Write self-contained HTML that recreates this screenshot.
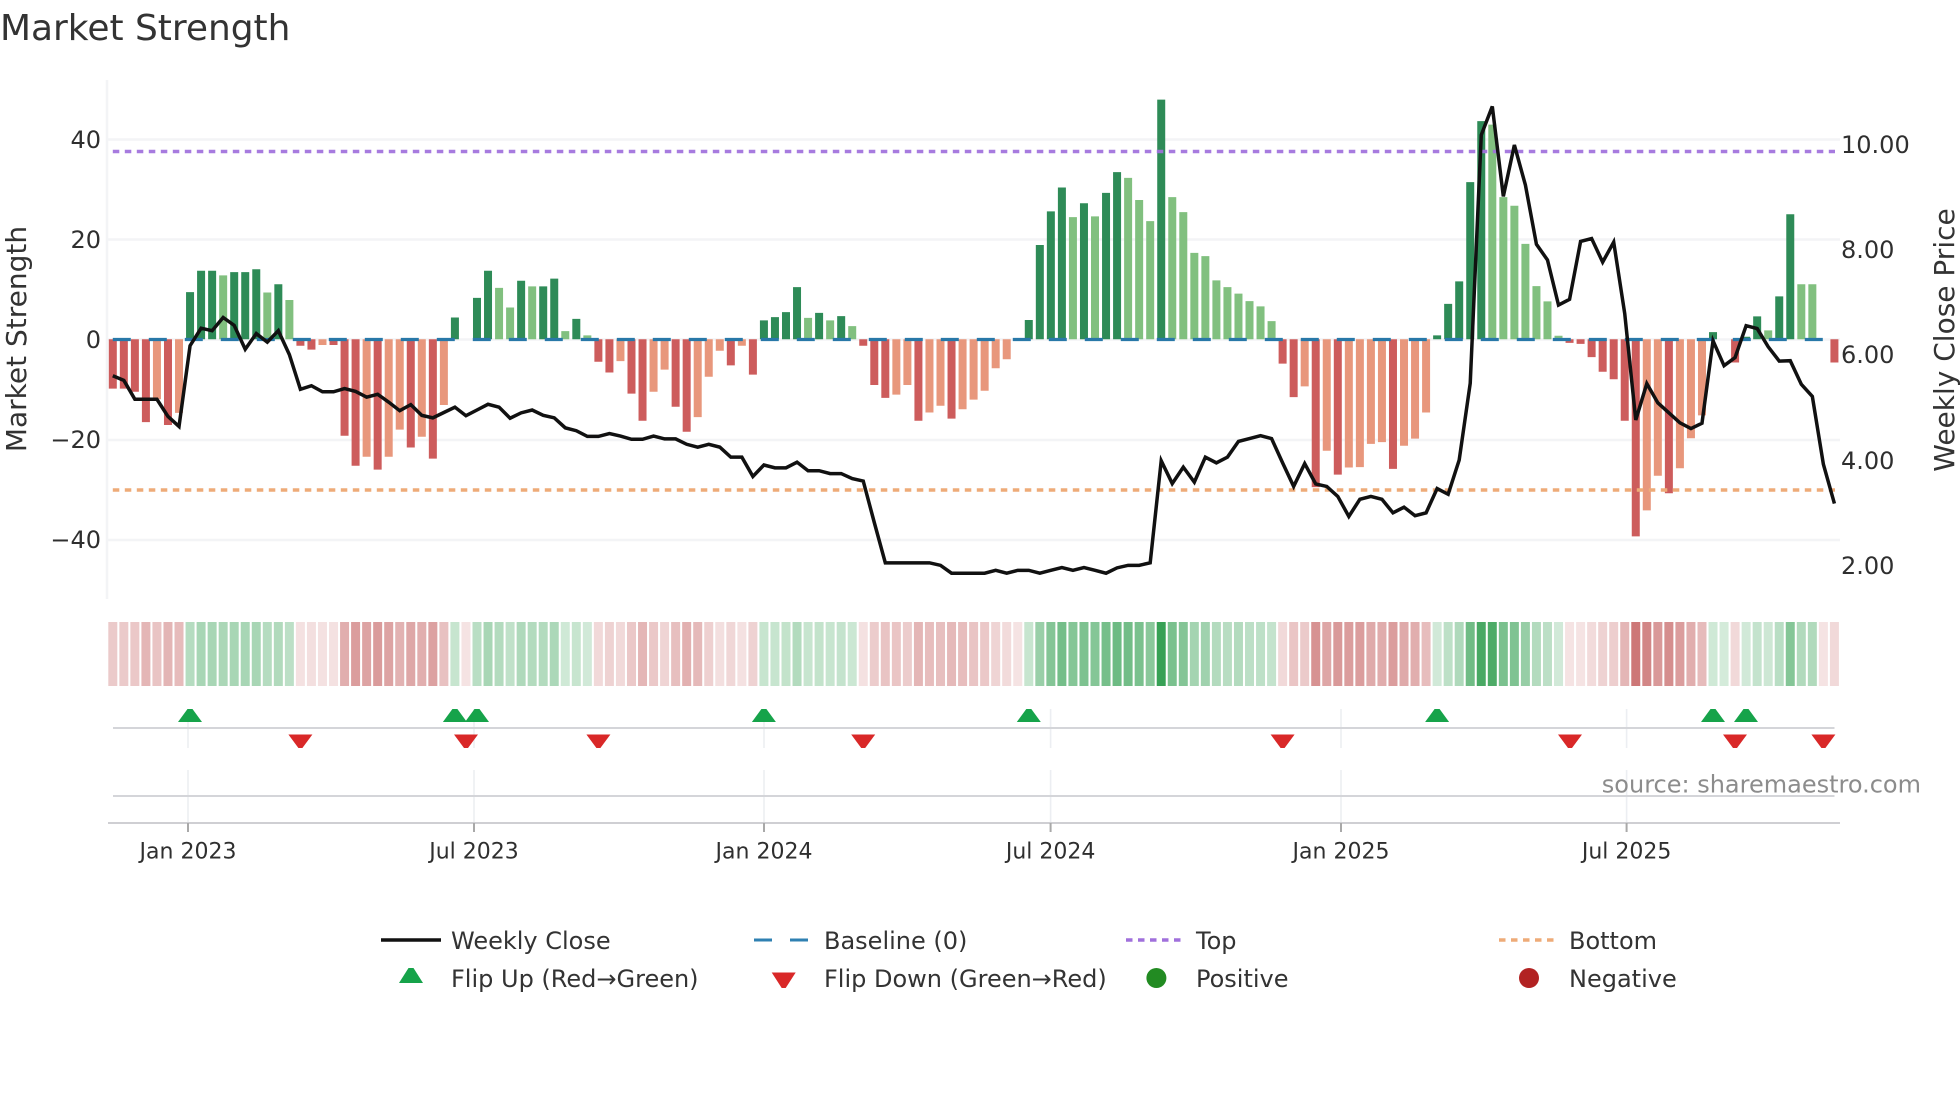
<!DOCTYPE html>
<html><head><meta charset="utf-8"><title>Market Strength</title>
<style>
html,body{margin:0;padding:0;background:#fff}
svg{display:block}
text{font-family:"DejaVu Sans","Liberation Sans",sans-serif}
</style></head><body>
<svg width="1960" height="1102" viewBox="0 0 1960 1102" xmlns="http://www.w3.org/2000/svg">
<rect width="1960" height="1102" fill="#fff"/>
<text x="0" y="40" font-size="35.95" fill="#333">Market Strength</text>

<!-- grid -->
<path d="M107 80V599" stroke="#f3f4f6" stroke-width="2.5"/>
<path d="M108 139.5H1840M108 239.5H1840M108 339.5H1840M108 440H1840M108 540H1840" stroke="#f3f4f6" stroke-width="2.5" fill="none"/>

<!-- bars -->
<g transform="matrix(11.036 0 0 .35714 112.8 60)" fill="none" stroke-width=".725">
<path stroke="#2e8b57" d="M7 782V650M8 782V590M9 782V590M11 782V594M12 782V594M13 782V586M15 782V628M31 782V721M33 782V666M34 782V590M37 782V618M39 782V634M40 782V612M42 782V725M59 782V729M60 782V720M61 782V706M62 782V636M64 782V708M66 782V717M83 782V728M84 782V518M85 782V424M86 782V357M88 782V401M90 782V372M91 782V314M95 782V111M120 782V771M121 782V683M122 782V620M123 782V342M124 782V171M145 782V762M148 782V775M149 782V718M151 782V662M152 782V432"/>
<path stroke="#81c07f" d="M10 782V603M14 782V651M16 782V672M35 782V638M36 782V693M38 782V634M41 782V759M43 782V771M63 782V722M65 782V729M67 782V745M87 782V440M89 782V438M92 782V330M93 782V392M94 782V451M96 782V384M97 782V426M98 782V540M99 782V549M100 782V617M101 782V636M102 782V654M103 782V675M104 782V690M105 782V731M125 782V181M126 782V384M127 782V408M128 782V515M129 782V633M130 782V676M131 782V772M150 782V757M153 782V628M154 782V628"/>
<path stroke="#cd5c5c" d="M0 782V920M1 782V920M2 782V929M3 782V1014M5 782V1022M17 782V800M18 782V811M20 782V798M21 782V1052M22 782V1136M24 782V1147M27 782V1085M29 782V1116M44 782V845M45 782V875M47 782V934M48 782V1010M51 782V971M52 782V1041M56 782V855M58 782V881M68 782V800M69 782V910M70 782V946M73 782V1010M76 782V1004M106 782V850M107 782V944M109 782V1196M111 782V1161M116 782V1145M132 782V792M133 782V795M134 782V832M135 782V873M136 782V894M137 782V1010M138 782V1334M141 782V1213M147 782V847M156 782V847"/>
<path stroke="#e8977c" d="M4 782V950M6 782V988M19 782V798M23 782V1111M25 782V1111M26 782V1035M28 782V1055M30 782V966M46 782V843M49 782V929M50 782V867M53 782V1000M54 782V887M55 782V814M57 782V800M71 782V937M72 782V910M74 782V987M75 782V968M77 782V978M78 782V951M79 782V926M80 782V863M81 782V838M108 782V914M110 782V1094M112 782V1141M113 782V1140M114 782V1075M115 782V1070M117 782V1080M118 782V1060M119 782V987M139 782V1261M140 782V1164M142 782V1143M143 782V1059M144 782V995"/>
</g>

<!-- reference lines -->
<path d="M112.8 339.5H1835" stroke="#2878a8" stroke-width="3.2" stroke-dasharray="18 18" fill="none"/>
<path d="M112.8 151.5H1835" stroke="#a070dc" stroke-opacity=".92" stroke-width="3.4" stroke-dasharray="6.5 5.5" fill="none"/>
<path d="M112.8 490H1835" stroke="#eeab78" stroke-width="3.4" stroke-dasharray="6.5 5.5" fill="none"/>

<!-- weekly close -->
<g transform="matrix(11.036 0 0 .35714 112.8 60)">
<polyline vector-effect="non-scaling-stroke" fill="none" stroke="#111" stroke-width="3.5" stroke-linejoin="miter" points="0,884 1,897 2,950 3,950 4,950 5,998 6,1026 7,800 8,751 9,758 10,721 11,743 12,810 13,766 14,790 15,758 16,825 17,922 18,912 19,929 20,929 21,920 22,928 23,944 24,936 25,958 26,982 27,965 28,995 29,1002 30,987 31,972 32,996 33,980 34,964 35,972 36,1003 37,988 38,980 39,995 40,1002 41,1030 42,1038 43,1054 44,1054 45,1046 46,1053 47,1062 48,1062 49,1053 50,1061 51,1061 52,1076 53,1084 54,1076 55,1084 56,1112 57,1112 58,1166 59,1134 60,1142 61,1142 62,1126 63,1150 64,1150 65,1158 66,1158 67,1172 68,1179 69,1295 70,1408 71,1408 72,1408 73,1408 74,1408 75,1415 76,1437 77,1437 78,1437 79,1437 80,1429 81,1437 82,1429 83,1429 84,1437 85,1429 86,1421 87,1429 88,1421 89,1429 90,1437 91,1422 92,1415 93,1415 94,1408 95,1122 96,1186 97,1140 98,1182 99,1112 100,1128 101,1112 102,1068 103,1060 104,1052 105,1060 106,1128 107,1194 108,1130 109,1187 110,1194 111,1222 112,1278 113,1230 114,1222 115,1230 116,1268 117,1252 118,1276 119,1268 120,1200 121,1216 122,1120 123,905 124,210 125,130 126,382 127,238 128,350 129,516 130,560 131,686 132,670 133,508 134,500 135,566 136,510 137,710 138,1008 139,906 140,960 141,988 142,1016 143,1032 144,1017 145,786 146,856 147,833 148,744 149,752 150,803 151,843 152,842 153,908 154,942 155,1132 156,1242"/>
</g>

<!-- axis labels -->
<g font-size="24" fill="#2f2f2f" text-anchor="end">
<text x="101" y="148">40</text>
<text x="101" y="248">20</text>
<text x="101" y="348">0</text>
<text x="101" y="448">−20</text>
<text x="101" y="548">−40</text>
</g>
<g font-size="24" fill="#2f2f2f">
<text x="1841" y="153">10.00</text>
<text x="1841" y="258">8.00</text>
<text x="1841" y="363">6.00</text>
<text x="1841" y="469">4.00</text>
<text x="1841" y="574">2.00</text>
</g>
<text font-size="28" fill="#333" text-anchor="middle" transform="translate(26 339) rotate(-90)">Market Strength</text>
<text font-size="28" fill="#333" text-anchor="middle" transform="translate(1954 340) rotate(-90)">Weekly Close Price</text>

<!-- heat strip -->
<g transform="matrix(11.036 0 0 64 112.8 622)" fill="none" stroke-width=".815">
<g stroke="#b02a2a"><path d="M0 0V1" opacity=".25"/><path d="M1 0V1" opacity=".25"/><path d="M2 0V1" opacity=".26"/><path d="M3 0V1" opacity=".34"/><path d="M4 0V1" opacity=".28"/><path d="M5 0V1" opacity=".35"/><path d="M6 0V1" opacity=".32"/></g>
<g stroke="#269946"><path d="M7 0V1" opacity=".34"/><path d="M8 0V1" opacity=".4"/><path d="M9 0V1" opacity=".4"/><path d="M10 0V1" opacity=".39"/><path d="M11 0V1" opacity=".4"/><path d="M12 0V1" opacity=".4"/><path d="M13 0V1" opacity=".4"/><path d="M14 0V1" opacity=".34"/><path d="M15 0V1" opacity=".36"/><path d="M16 0V1" opacity=".31"/></g>
<g stroke="#b02a2a"><path d="M17 0V1" opacity=".14"/><path d="M18 0V1" opacity=".15"/><path d="M19 0V1" opacity=".14"/><path d="M20 0V1" opacity=".14"/><path d="M21 0V1" opacity=".38"/><path d="M22 0V1" opacity=".46"/><path d="M23 0V1" opacity=".43"/><path d="M24 0V1" opacity=".47"/><path d="M25 0V1" opacity=".43"/><path d="M26 0V1" opacity=".36"/><path d="M27 0V1" opacity=".41"/><path d="M28 0V1" opacity=".38"/><path d="M29 0V1" opacity=".44"/><path d="M30 0V1" opacity=".29"/></g>
<path stroke="#269946" d="M31 0V1" opacity=".26"/>
<path stroke="#b02a2a" d="M32 0V1" opacity=".13"/>
<g stroke="#269946"><path d="M33 0V1" opacity=".32"/><path d="M34 0V1" opacity=".4"/><path d="M35 0V1" opacity=".35"/><path d="M36 0V1" opacity=".29"/><path d="M37 0V1" opacity=".37"/><path d="M38 0V1" opacity=".35"/><path d="M39 0V1" opacity=".35"/><path d="M40 0V1" opacity=".38"/><path d="M41 0V1" opacity=".22"/><path d="M42 0V1" opacity=".26"/><path d="M43 0V1" opacity=".21"/></g>
<g stroke="#b02a2a"><path d="M44 0V1" opacity=".18"/><path d="M45 0V1" opacity=".21"/><path d="M46 0V1" opacity=".18"/><path d="M47 0V1" opacity=".26"/><path d="M48 0V1" opacity=".34"/><path d="M49 0V1" opacity=".26"/><path d="M50 0V1" opacity=".2"/><path d="M51 0V1" opacity=".3"/><path d="M52 0V1" opacity=".37"/><path d="M53 0V1" opacity=".33"/><path d="M54 0V1" opacity=".22"/><path d="M55 0V1" opacity=".15"/><path d="M56 0V1" opacity=".19"/><path d="M57 0V1" opacity=".14"/><path d="M58 0V1" opacity=".21"/></g>
<g stroke="#269946"><path d="M59 0V1" opacity=".26"/><path d="M60 0V1" opacity=".26"/><path d="M61 0V1" opacity=".28"/><path d="M62 0V1" opacity=".35"/><path d="M63 0V1" opacity=".26"/><path d="M64 0V1" opacity=".28"/><path d="M65 0V1" opacity=".26"/><path d="M66 0V1" opacity=".27"/><path d="M67 0V1" opacity=".24"/></g>
<g stroke="#b02a2a"><path d="M68 0V1" opacity=".14"/><path d="M69 0V1" opacity=".24"/><path d="M70 0V1" opacity=".28"/><path d="M71 0V1" opacity=".27"/><path d="M72 0V1" opacity=".24"/><path d="M73 0V1" opacity=".34"/><path d="M74 0V1" opacity=".31"/><path d="M75 0V1" opacity=".3"/><path d="M76 0V1" opacity=".33"/><path d="M77 0V1" opacity=".31"/><path d="M78 0V1" opacity=".28"/><path d="M79 0V1" opacity=".26"/><path d="M80 0V1" opacity=".2"/><path d="M81 0V1" opacity=".17"/><path d="M82 0V1" opacity=".13"/></g>
<g stroke="#269946"><path d="M83 0V1" opacity=".26"/><path d="M84 0V1" opacity=".47"/><path d="M85 0V1" opacity=".57"/><path d="M86 0V1" opacity=".64"/><path d="M87 0V1" opacity=".56"/><path d="M88 0V1" opacity=".6"/><path d="M89 0V1" opacity=".56"/><path d="M90 0V1" opacity=".63"/><path d="M91 0V1" opacity=".67"/><path d="M92 0V1" opacity=".65"/><path d="M93 0V1" opacity=".61"/><path d="M94 0V1" opacity=".54"/><path d="M95 0V1" opacity=".92"/><path d="M96 0V1" opacity=".61"/><path d="M97 0V1" opacity=".57"/><path d="M98 0V1" opacity=".42"/><path d="M99 0V1" opacity=".44"/><path d="M100 0V1" opacity=".35"/><path d="M101 0V1" opacity=".33"/><path d="M102 0V1" opacity=".35"/><path d="M103 0V1" opacity=".31"/><path d="M104 0V1" opacity=".3"/><path d="M105 0V1" opacity=".27"/></g>
<g stroke="#b02a2a"><path d="M106 0V1" opacity=".18"/><path d="M107 0V1" opacity=".27"/><path d="M108 0V1" opacity=".25"/><path d="M109 0V1" opacity=".51"/><path d="M110 0V1" opacity=".42"/><path d="M111 0V1" opacity=".48"/><path d="M112 0V1" opacity=".46"/><path d="M113 0V1" opacity=".46"/><path d="M114 0V1" opacity=".4"/><path d="M115 0V1" opacity=".39"/><path d="M116 0V1" opacity=".46"/><path d="M117 0V1" opacity=".4"/><path d="M118 0V1" opacity=".38"/><path d="M119 0V1" opacity=".31"/></g>
<g stroke="#269946"><path d="M120 0V1" opacity=".21"/><path d="M121 0V1" opacity=".3"/><path d="M122 0V1" opacity=".37"/><path d="M123 0V1" opacity=".66"/><path d="M124 0V1" opacity=".84"/><path d="M125 0V1" opacity=".82"/><path d="M126 0V1" opacity=".61"/><path d="M127 0V1" opacity=".59"/><path d="M128 0V1" opacity=".48"/><path d="M129 0V1" opacity=".35"/><path d="M130 0V1" opacity=".31"/><path d="M131 0V1" opacity=".21"/></g>
<g stroke="#b02a2a"><path d="M132 0V1" opacity=".13"/><path d="M133 0V1" opacity=".13"/><path d="M134 0V1" opacity=".17"/><path d="M135 0V1" opacity=".21"/><path d="M136 0V1" opacity=".23"/><path d="M137 0V1" opacity=".34"/><path d="M138 0V1" opacity=".64"/><path d="M139 0V1" opacity=".57"/><path d="M140 0V1" opacity=".48"/><path d="M141 0V1" opacity=".53"/><path d="M142 0V1" opacity=".46"/><path d="M143 0V1" opacity=".38"/><path d="M144 0V1" opacity=".32"/></g>
<g stroke="#269946"><path d="M145 0V1" opacity=".22"/><path d="M146 0V1" opacity=".2"/></g>
<path stroke="#b02a2a" d="M147 0V1" opacity=".18"/>
<g stroke="#269946"><path d="M148 0V1" opacity=".21"/><path d="M149 0V1" opacity=".27"/><path d="M150 0V1" opacity=".23"/><path d="M151 0V1" opacity=".32"/><path d="M152 0V1" opacity=".56"/><path d="M153 0V1" opacity=".36"/><path d="M154 0V1" opacity=".36"/></g>
<g stroke="#b02a2a"><path d="M155 0V1" opacity=".13"/><path d="M156 0V1" opacity=".18"/></g>
</g>

<!-- lower panels -->
<path d="M188 709V748M188 770V823M474 709V748M474 770V823M764 709V748M764 770V823M1050.6 709V748M1050.6 770V823M1341 709V748M1341 770V823M1626.6 709V748M1626.6 770V823" stroke="#eceef2" stroke-width="1.6" fill="none"/>
<path d="M113 728H1834.5M113 796H1834.5" stroke="#d4d5d9" stroke-width="2" fill="none"/>
<path d="M108 823H1840" stroke="#cfcfd3" stroke-width="2" fill="none"/>
<path d="M188 823V832M474 823V832M764 823V832M1050.6 823V832M1341 823V832M1626.6 823V832" stroke="#a9a9a9" stroke-width="2" fill="none"/>

<!-- flip markers -->
<g fill="#16a34a">
<path transform="translate(190)" d="M-12 722L-2.5 709H2.5L12 722Z"/>
<path transform="translate(454.9)" d="M-12 722L-2.5 709H2.5L12 722Z"/>
<path transform="translate(477)" d="M-12 722L-2.5 709H2.5L12 722Z"/>
<path transform="translate(763.9)" d="M-12 722L-2.5 709H2.5L12 722Z"/>
<path transform="translate(1028.8)" d="M-12 722L-2.5 709H2.5L12 722Z"/>
<path transform="translate(1437.1)" d="M-12 722L-2.5 709H2.5L12 722Z"/>
<path transform="translate(1713)" d="M-12 722L-2.5 709H2.5L12 722Z"/>
<path transform="translate(1746)" d="M-12 722L-2.5 709H2.5L12 722Z"/>
</g>
<g fill="#d92828">
<path transform="translate(300.4)" d="M-12 734.5H12L2 748H-2Z"/>
<path transform="translate(466)" d="M-12 734.5H12L2 748H-2Z"/>
<path transform="translate(598.4)" d="M-12 734.5H12L2 748H-2Z"/>
<path transform="translate(863.2)" d="M-12 734.5H12L2 748H-2Z"/>
<path transform="translate(1282.6)" d="M-12 734.5H12L2 748H-2Z"/>
<path transform="translate(1570)" d="M-12 734.5H12L2 748H-2Z"/>
<path transform="translate(1735)" d="M-12 734.5H12L2 748H-2Z"/>
<path transform="translate(1823.4)" d="M-12 734.5H12L2 748H-2Z"/>
</g>

<text x="1921" y="792.5" font-size="24" fill="#8c8c8c" text-anchor="end">source: sharemaestro.com</text>

<!-- x ticks -->
<g font-size="22" fill="#2f2f2f" text-anchor="middle">
<text x="188" y="858.5">Jan 2023</text>
<text x="474" y="858.5">Jul 2023</text>
<text x="764" y="858.5">Jan 2024</text>
<text x="1050.6" y="858.5">Jul 2024</text>
<text x="1341" y="858.5">Jan 2025</text>
<text x="1626.6" y="858.5">Jul 2025</text>
</g>

<!-- legend -->
<path d="M381 940H441" stroke="#111" stroke-width="3.5"/>
<path d="M754 940H772M790 940H808" stroke="#2f80b2" stroke-width="3"/>
<path d="M1126 940H1182" stroke="#a070dc" stroke-width="3.4" stroke-dasharray="6.5 5.5"/>
<path d="M1499 940H1555" stroke="#eeab78" stroke-width="3.4" stroke-dasharray="6.5 5.5"/>
<path d="M399 983L408.5 968H413.5L423 983Z" fill="#16a34a"/>
<path d="M771.7 972.5H795.7L785.7 988H781.7Z" fill="#d92828"/>
<circle cx="1156.4" cy="978" r="10" fill="#228b22"/>
<circle cx="1529" cy="978" r="10" fill="#b22222"/>
<g font-size="24" fill="#333">
<text x="451" y="949">Weekly Close</text>
<text x="824" y="949">Baseline (0)</text>
<text x="1196" y="949">Top</text>
<text x="1569" y="949">Bottom</text>
<text x="451" y="987">Flip Up (Red→Green)</text>
<text x="824" y="987">Flip Down (Green→Red)</text>
<text x="1196" y="987">Positive</text>
<text x="1569" y="987">Negative</text>
</g>
</svg>
</body></html>
